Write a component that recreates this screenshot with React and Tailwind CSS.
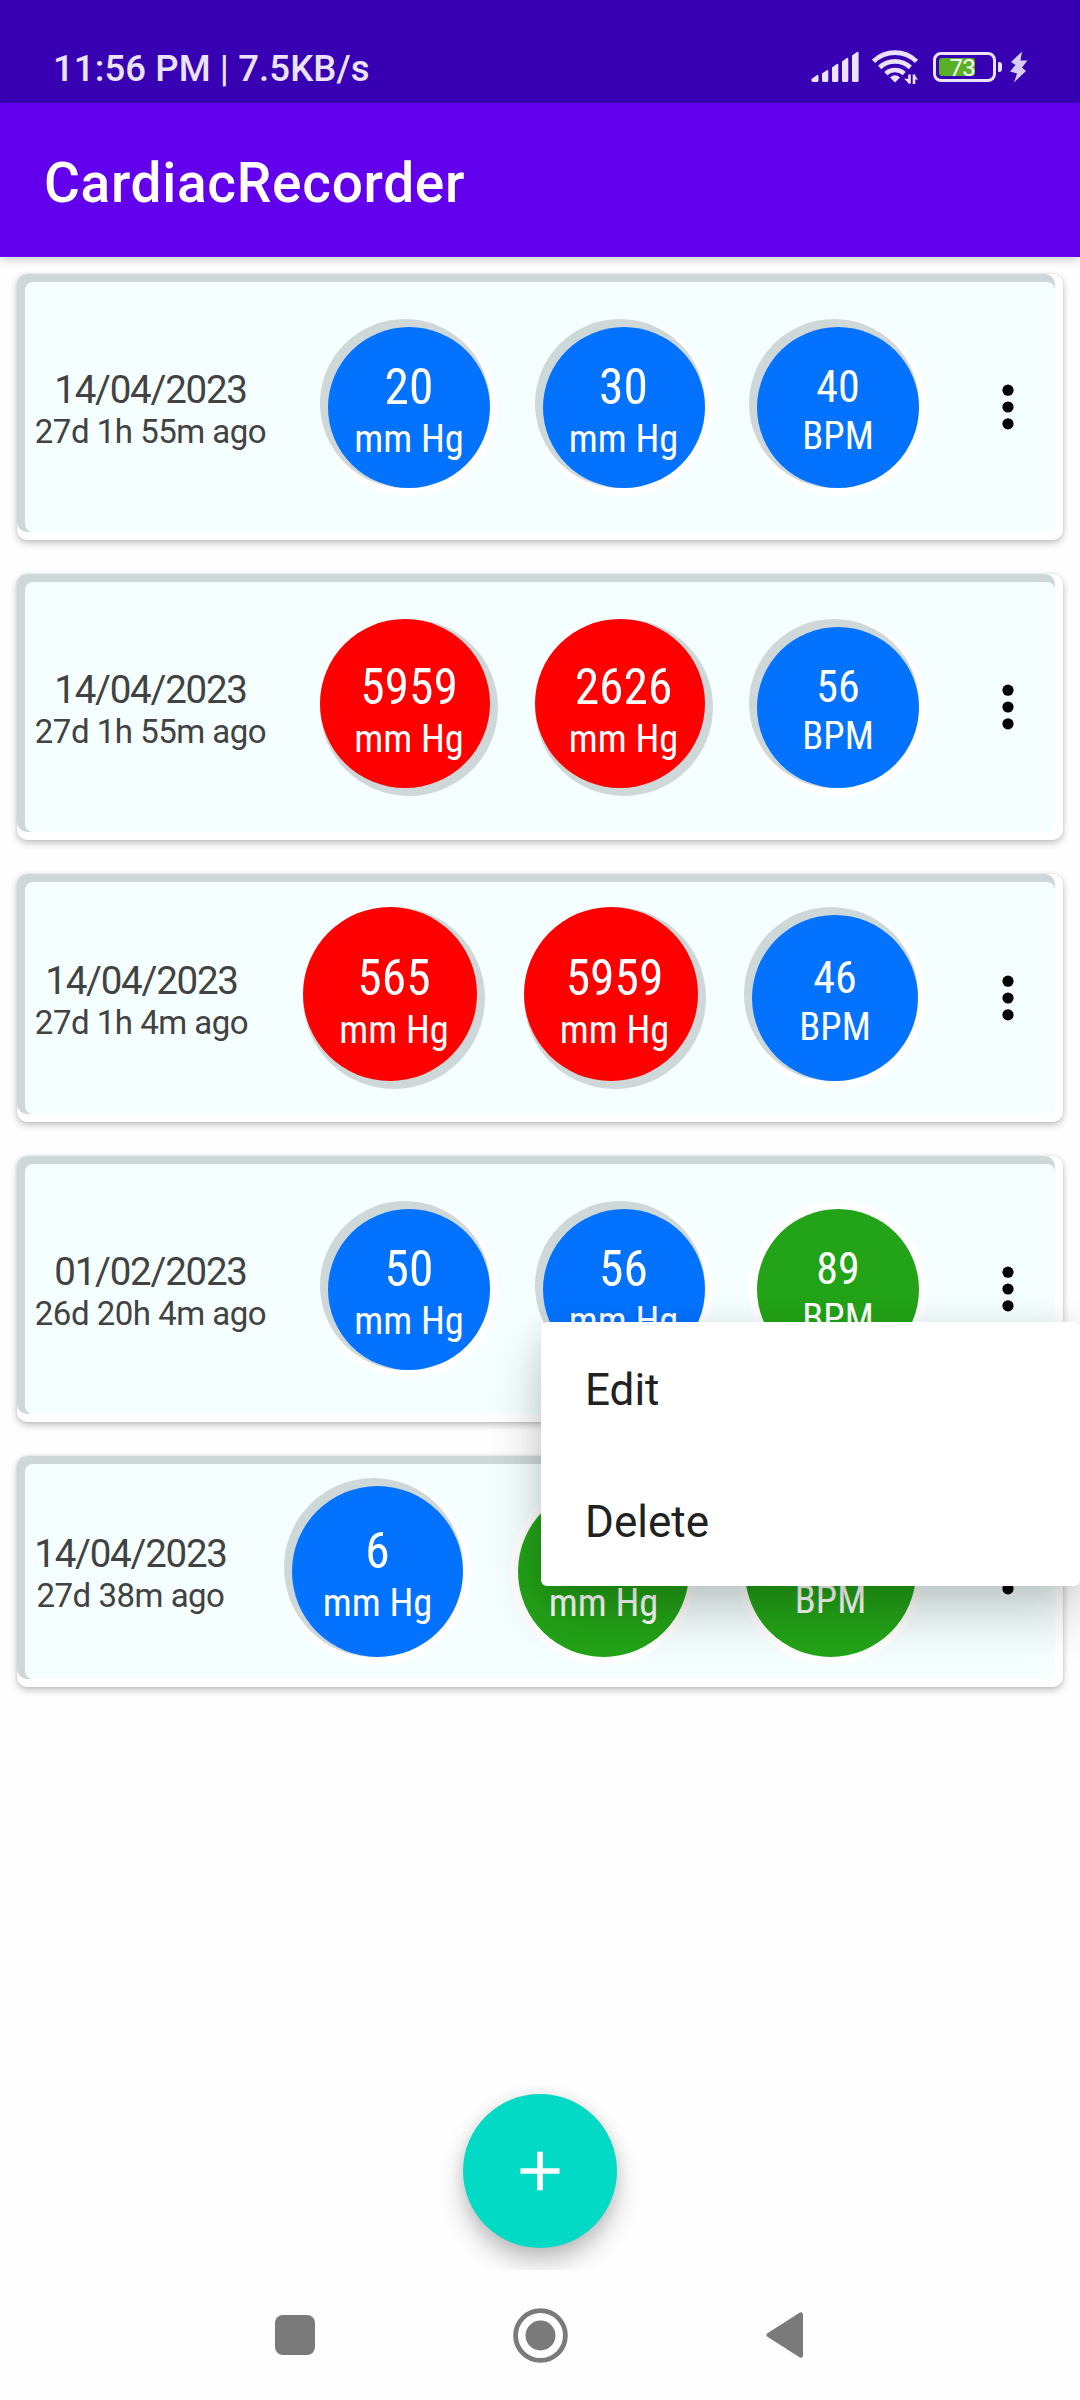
import React from "react";

const records = [
  {
    date: "14/04/2023", ago: "27d 1h 55m ago",
    card: "h-[266px]", info: "w-[233px]", size: "w-[178px] h-[177px]",
    gaps: ["ml-[53px]", "ml-[36.5px]", "ml-[36.5px]"],
    values: [["20", "low"], ["30", "low"], ["40", "low"]],
  },
  {
    date: "14/04/2023", ago: "27d 1h 55m ago",
    card: "h-[266px]", info: "w-[233px]", size: "w-[178px] h-[177px]",
    gaps: ["ml-[53px]", "ml-[36.5px]", "ml-[36.5px]"],
    values: [["5959", "high"], ["2626", "high"], ["56", "low"]],
  },
  {
    date: "14/04/2023", ago: "27d 1h 4m ago",
    card: "h-[248px]", info: "w-[215px]", size: "w-[182px] h-[182px]",
    gaps: ["ml-[54px]", "ml-[38.5px]", "ml-[38.5px]"],
    values: [["565", "high"], ["5959", "high"], ["46", "low"]],
  },
  {
    date: "01/02/2023", ago: "26d 20h 4m ago",
    card: "h-[266px]", info: "w-[233px]", size: "w-[178px] h-[177px]",
    gaps: ["ml-[53px]", "ml-[36.5px]", "ml-[36.5px]"],
    values: [["50", "low"], ["56", "low"], ["89", "normal"]],
    menu: true,
  },
  {
    date: "14/04/2023", ago: "27d 38m ago",
    card: "h-[231px]", info: "w-[193px]", size: "w-[187px] h-[187px]",
    gaps: ["ml-[57px]", "ml-[39px]", "ml-[40px]"],
    values: [["6", "low"], ["", "normal"], ["", "normal"]],
  },
];

const tones = {
  low: { base: "bg-white", rim: "bg-[#cfd8d9] pl-2 pt-2 mr-2 mb-2", face: "bg-[#0373ff]" },
  high: { base: "bg-[#cfd8d9]", rim: "mr-2 mb-2", face: "bg-[#fe0000]" },
  normal: { base: "bg-white", rim: "m-2", face: "bg-[#23a317]" },
};

function Reading({ value, tone, size, gap, bpm }) {
  const t = tones[tone];
  return (
    <div className={`relative flex shrink-0 rounded-[50%] ${size} ${gap} ${t.base}`}>
      <div className={`flex grow rounded-[50%] ${t.rim}`}>
        <div className={`grow rounded-[50%] ${t.face}`} />
      </div>
      <div className="absolute inset-0 flex flex-col items-center justify-center whitespace-nowrap text-white [font-stretch:75%]">
        {bpm ? (
          <>
            <span className="mt-[6px] h-[51px] text-[44px] leading-[50px]">{value}</span>
            <span className="h-[46px] text-[38.5px] leading-[46px]">BPM</span>
          </>
        ) : (
          <>
            <span className="mt-[6px] h-[57px] text-[49.5px] leading-[56px]">{value}</span>
            <span className="h-[46px] text-[38.5px] leading-[46px]">mm Hg</span>
          </>
        )}
      </div>
    </div>
  );
}

function Menu() {
  return (
    <div className="absolute left-[524px] top-[166px] z-10 flex h-[264px] w-[539px] flex-col rounded-[6px] bg-white text-[44px] text-[#212121] shadow-[0_26px_54px_rgba(0,0,0,0.22),0_0_26px_rgba(0,0,0,0.06)]">
      <div className="flex h-[132px] items-center pl-[44px] pt-[4px]">Edit</div>
      <div className="flex h-[132px] items-center pl-[44px] pt-[4px]">Delete</div>
    </div>
  );
}

function Card({ r }) {
  return (
    <div className={`relative flex w-[1046px] shrink-0 rounded-[10px] bg-white shadow-[0_3px_7px_rgba(0,0,0,0.24),0_0_3px_rgba(0,0,0,0.1)] ${r.card} ${r.menu ? "z-10" : ""}`}>
      <div className="mb-2 mr-2 flex grow rounded-[10px] bg-[#cfd8d9] pl-2 pt-2">
        <div className="flex grow items-center rounded-[8px] bg-[#f5ffff] pl-[9px]">
          <div className={`flex shrink-0 flex-col items-center whitespace-nowrap pt-[3px] text-[#424242] ${r.info}`}>
            <span className="h-[45px] text-[38.5px] leading-[45px] tracking-[-1.25px]">{r.date}</span>
            <span className="h-[39px] text-[33px] leading-[39px] tracking-[-0.5px]">{r.ago}</span>
          </div>
          {r.values.map(([value, tone], i) => (
            <Reading key={i} value={value} tone={tone} size={r.size} gap={r.gaps[i]} bpm={i === 2} />
          ))}
          <svg className="ml-auto mr-[41px]" width="12" height="46" viewBox="0 0 12 46">
            <circle cx="6" cy="6.2" r="5.6" />
            <circle cx="6" cy="23" r="5.6" />
            <circle cx="6" cy="39.8" r="5.6" />
          </svg>
        </div>
      </div>
      {r.menu && <Menu />}
    </div>
  );
}

function StatusIcons() {
  return (
    <div className="mt-[26px] flex items-center self-start text-[#ebe3fb]">
      <svg width="49" height="32" viewBox="0 0 49 32" fill="currentColor">
        <path d="M0.500 28.500 a1 1 0 0 1 .4-.8 L6 24 a1.200 1.200 0 0 1 1.500 1 V29.500 a1.500 1.500 0 0 1-1.500 1.500 H2 a1.500 1.500 0 0 1-1.500-1.500Z" />
        <path d="M11 22.500 l4.800-3.300 a1 1 0 0 1 1.500 .8 V29.500 a1.500 1.500 0 0 1-1.500 1.500 H12.500 a1.500 1.500 0 0 1-1.500-1.500Z" />
        <path d="M21 16.500 l4.800-3.500 a1 1 0 0 1 1.500 .8 V29.500 a1.500 1.500 0 0 1-1.500 1.500 H22.500 a1.500 1.500 0 0 1-1.500-1.500Z" />
        <path d="M31 10.500 l4.800-3.500 a1 1 0 0 1 1.500 .8 V29.500 a1.500 1.500 0 0 1-1.500 1.500 H32.500 a1.500 1.500 0 0 1-1.500-1.500Z" />
        <path d="M41 4.500 l5-3.500 a1 1 0 0 1 1.600 .8 V29.500 a1.500 1.500 0 0 1-1.500 1.500 H42.500 a1.500 1.500 0 0 1-1.500-1.500Z" />
      </svg>
      <svg className="ml-[12px]" width="47" height="36" viewBox="0 0 47 36" fill="none" stroke="currentColor" strokeWidth="4.600">
        <path d="M1.500 12.300 A31 31 0 0 1 44.500 12.300" />
        <path d="M7.700 18.500 A22.300 22.300 0 0 1 38.300 18.500" />
        <path d="M13.800 24.600 A13.700 13.700 0 0 1 32.200 24.600" />
        <path d="M18 28.500 Q23 23.800 28 28.500 L23 33.500Z" fill="currentColor" stroke="none" />
        <path d="M37.500 25.500 V34.500 M42 25.500 V35" strokeWidth="2.600" />
        <path d="M32 29.800 L37.500 35 V29.800Z M42 25.500 V30.500 H46Z" fill="currentColor" stroke="none" />
      </svg>
      <div className="ml-[14px] flex h-[30px] w-[63px] rounded-[8px] border-[3px] border-current p-[3px]">
        <div className="flex h-[18px] w-[36px] justify-end rounded-[3px] bg-[#57b025]">
          <span className="text-[24px] leading-[20px] tracking-[-0.8px] text-white">73</span>
        </div>
      </div>
      <div className="ml-[2px] h-[10px] w-[4px] rounded-r-[3px] rounded-l-[1px] bg-current" />
      <svg className="ml-[7px]" width="19" height="32" viewBox="0 0 19 32" fill="#d7ccf3">
        <path d="M13 .5 L2 11 L6.500 14 L1 20.500 L8 22.500 L5 31.500 L17 20 L13 16.500 L18.500 9.500 L11.500 9.500Z" />
      </svg>
    </div>
  );
}

export default function App() {
  return (
    <div className="flex h-[2400px] w-[1080px] flex-col overflow-hidden bg-[#fefefe] font-['Roboto',sans-serif]">
      <div className="flex h-[103px] shrink-0 justify-between bg-[#3700b3] pl-[53px] pr-[52px] pt-[23px]">
        <span className="mt-[24px] text-[36.5px] leading-[44px] tracking-[0.1px] font-medium text-[#ebe3fb]">11:56 PM | 7.5KB/s</span>
        <StatusIcons />
      </div>
      <header className="flex h-[154px] shrink-0 items-center bg-[#6200ee] pl-[44px] shadow-[0_3px_9px_rgba(0,0,0,0.18)]">
        <h1 className="pt-[6px] text-[55px] leading-[64px] tracking-[0.7px] font-medium text-white">CardiacRecorder</h1>
      </header>
      <main className="flex h-[2013px] shrink-0 flex-col items-center overflow-hidden">
        <div className="flex flex-col gap-[34px] pt-[17px]">
          {records.map((r, i) => <Card key={i} r={r} />)}
        </div>
        <button className="mb-[22px] mt-auto flex size-[154px] shrink-0 items-center justify-center rounded-full bg-[#03dac5] shadow-[0_14px_24px_rgba(0,0,0,0.24),0_0_14px_rgba(0,0,0,0.08)]">
          <svg width="40" height="40" viewBox="0 0 40 40" stroke="white" strokeWidth="5.700">
            <path d="M.5 20H39.500M20 .7V39.300" />
          </svg>
        </button>
      </main>
      <nav className="flex h-[130px] shrink-0 items-center justify-center bg-[#fefefe] pr-[2px] text-[#7a7a7a]">
        <div className="size-[40px] rounded-[8px] bg-current" />
        <svg className="ml-[198px]" width="55" height="55" viewBox="0 0 55 55">
          <circle cx="27.500" cy="27.500" r="24.900" fill="none" stroke="currentColor" strokeWidth="4.800" />
          <circle cx="27.500" cy="27.500" r="15" fill="currentColor" />
        </svg>
        <svg className="ml-[198px]" width="38" height="46" viewBox="0 0 38 46" fill="currentColor" stroke="currentColor" strokeWidth="4" strokeLinejoin="round">
          <path d="M2.500 23 L35 2.300 V43.700Z" />
        </svg>
      </nav>
    </div>
  );
}
